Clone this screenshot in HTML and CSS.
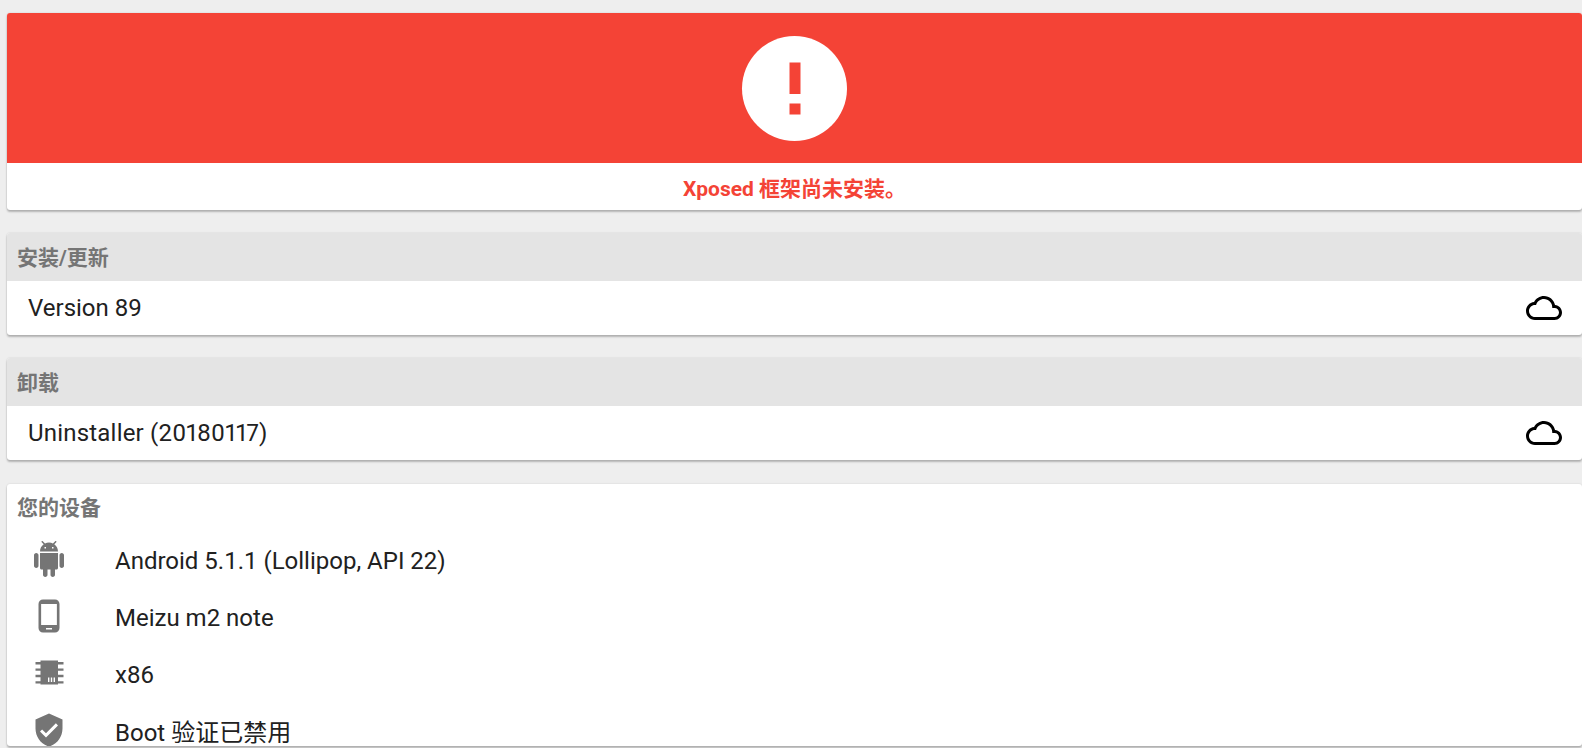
FILE: index.html
```html
<!DOCTYPE html>
<html lang="zh">
<head>
  <meta charset="UTF-8">
  <title>Xposed Installer</title>
  <link rel="stylesheet" href="styles.css">
</head>
<body>
  <div class="page">
    <div class="card status-card">
      <div class="status-banner">
        <div class="status-circle">
          <svg width="36" height="66" viewBox="0 0 36 66"><path fill="#f44336" d="M12.5 7.5h11v31.5h-11zM12.5 48.5h11v11h-11z"/></svg>
        </div>
      </div>
      <div class="status-text">Xposed 框架尚未安装。</div>
    </div>

    <div class="card">
      <div class="card-header">安装/更新</div>
      <div class="download-row">
        <span>Version 89</span>
        <svg class="cloud" width="36" height="36" viewBox="0 0 24 24"><path d="M19.35 10.04C18.67 6.59 15.64 4 12 4 9.11 4 6.6 5.64 5.35 8.04 2.34 8.36 0 10.91 0 14c0 3.31 2.69 6 6 6h13c2.76 0 5-2.24 5-5 0-2.64-2.05-4.78-4.65-4.96zM19 18H6c-2.21 0-4-1.79-4-4s1.79-4 4-4h.71C7.37 7.69 9.48 6 12 6c3.04 0 5.5 2.46 5.5 5.5v.5H19c1.66 0 3 1.34 3 3s-1.34 3-3 3z"/></svg>
      </div>
    </div>

    <div class="card">
      <div class="card-header">卸载</div>
      <div class="download-row">
        <span class="uninstaller-name">Uninstaller (20180117)</span>
        <svg class="cloud" width="36" height="36" viewBox="0 0 24 24"><path d="M19.35 10.04C18.67 6.59 15.64 4 12 4 9.11 4 6.6 5.64 5.35 8.04 2.34 8.36 0 10.91 0 14c0 3.31 2.69 6 6 6h13c2.76 0 5-2.24 5-5 0-2.64-2.05-4.78-4.65-4.96zM19 18H6c-2.21 0-4-1.79-4-4s1.79-4 4-4h.71C7.37 7.69 9.48 6 12 6c3.04 0 5.5 2.46 5.5 5.5v.5H19c1.66 0 3 1.34 3 3s-1.34 3-3 3z"/></svg>
      </div>
    </div>

    <div class="card device-card">
      <div class="device-title">您的设备</div>
      <div class="device-row">
        <svg class="device-icon" width="36" height="36" viewBox="0 0 24 24"><path d="M6 18c0 .55.45 1 1 1h1v3.5c0 .83.67 1.5 1.5 1.5s1.5-.67 1.5-1.5V19h2v3.5c0 .83.67 1.5 1.5 1.5s1.5-.67 1.5-1.5V19h1c.55 0 1-.45 1-1V8H6v10zM3.5 8C2.67 8 2 8.67 2 9.5v7c0 .83.67 1.5 1.5 1.5S5 17.33 5 16.5v-7C5 8.67 4.33 8 3.5 8zm17 0c-.83 0-1.5.67-1.5 1.5v7c0 .83.67 1.5 1.5 1.5s1.5-.67 1.5-1.5v-7c0-.83-.67-1.5-1.5-1.5zm-4.97-5.84l1.3-1.3c.2-.2.2-.51 0-.71-.2-.2-.51-.2-.71 0l-1.48 1.48C13.85 1.23 12.95 1 12 1c-.96 0-1.86.23-2.66.63L7.85.15c-.2-.2-.51-.2-.71 0-.2.2-.2.51 0 .71l1.31 1.31C6.97 3.26 6 5.01 6 7h12c0-1.99-.97-3.75-2.47-4.84zM10 5H9V4h1v1zm5 0h-1V4h1v1z"/></svg>
        <span>Android 5.1.1 (Lollipop, API 22)</span>
      </div>
      <div class="device-row">
        <svg class="device-icon" width="36" height="36" viewBox="0 0 24 24"><path d="M16 1H8C6.34 1 5 2.34 5 4v16c0 1.66 1.34 3 3 3h8c1.66 0 3-1.34 3-3V4c0-1.66-1.34-3-3-3zm-2 20h-4v-1h4v1zm3.25-3H6.75V4h10.5v14z"/></svg>
        <span>Meizu m2 note</span>
      </div>
      <div class="device-row">
        <svg class="device-icon" width="36" height="36" viewBox="0 0 36 36"><path d="M9.5 5.5h17.5v24H9.5zM4.5 7h5v2.4h-5zM4.5 13.4h5v2.4h-5zM4.5 19.8h5v2.4h-5zM4.5 26.2h5v2.4h-5zM27 7h5.5v2.4H27zM27 13.4h5.5v2.4H27zM27 19.8h5.5v2.4H27zM27 26.2h5.5v2.4H27z"/><path fill="#fff" d="M17 22.5h1.4v4.5H17zM19.8 22.5h1.4v4.5h-1.4zM22.6 22.5H24v4.5h-1.4z"/></svg>
        <span>x86</span>
      </div>
      <div class="device-row">
        <svg class="device-icon" width="36" height="36" viewBox="0 0 24 24"><path d="M12 1L3 5v6c0 5.55 3.84 10.74 9 12 5.16-1.26 9-6.45 9-12V5l-9-4zm-2 16l-4-4 1.41-1.41L10 14.17l6.59-6.59L18 9l-8 8z"/></svg>
        <span>Boot 验证已禁用</span>
      </div>
    </div>
  </div>
</body>
</html>
```

FILE: styles.css
```css
html, body {
  margin: 0;
  height: 100%;
  overflow: hidden;
}
body {
  background: #eeeeee;
  font-family: Roboto, "Noto Sans CJK SC", sans-serif;
  color: #212121;
}
.page {
  display: flex;
  flex-direction: column;
  gap: 23px;
  padding: 13px 0 0 7px;
}
.card {
  background: #fff;
  border-radius: 3px;
  box-shadow: 0 2px 2px rgba(0,0,0,0.24), 0 0 2px rgba(0,0,0,0.14);
  overflow: hidden;
}
.status-banner {
  height: 150px;
  background: #f44336;
  display: flex;
  align-items: center;
  justify-content: center;
}
.status-circle {
  width: 105px;
  height: 105px;
  border-radius: 50%;
  background: #fff;
  display: flex;
  align-items: center;
  justify-content: center;
}
.status-text {
  height: 47px;
  line-height: 52px;
  text-align: center;
  font-size: 21px;
  font-weight: 700;
  color: #f44336;
}
.card-header {
  height: 48px;
  line-height: 51px;
  padding-left: 10px;
  background: #e4e4e4;
  font-size: 21px;
  font-weight: 700;
  color: #757575;
}
.download-row {
  height: 54px;
  display: flex;
  align-items: center;
  justify-content: space-between;
  padding: 0 20px 0 21px;
  font-size: 24px;
}
.uninstaller-name {
  font-variant-numeric: proportional-nums;
  letter-spacing: 0.2px;
}
.device-card {
  height: 262px;
  margin-top: 1px;
}
.device-title {
  height: 46px;
  line-height: 49px;
  padding-left: 10px;
  font-size: 21px;
  font-weight: 700;
  color: #757575;
}
.device-row {
  height: 57px;
  display: flex;
  align-items: center;
  gap: 48px;
  padding-left: 24px;
  font-size: 24px;
}
.device-row span {
  padding-top: 4px;
}
.device-row:last-child span {
  padding-top: 2px;
}
.device-icon {
  flex: none;
  fill: #757575;
}
```
